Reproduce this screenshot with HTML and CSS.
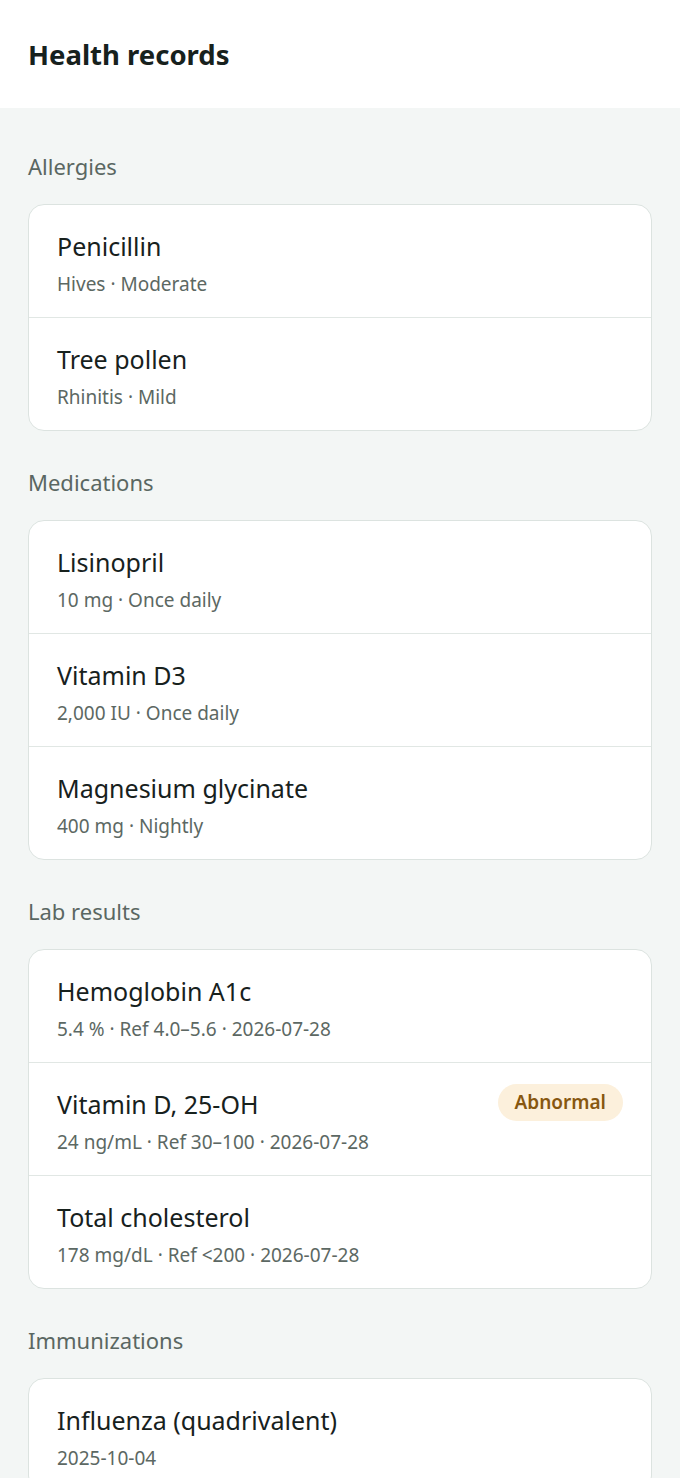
FILE: index.html
```html
<!DOCTYPE html>
<html lang="en">
<head>
<meta charset="utf-8">
<title>Health records</title>
<link rel="stylesheet" href="styles.css">
</head>
<body>
<header class="topbar">
  <h1 class="title">Health records</h1>
</header>
<main class="content">
  <section class="section">
    <h2 class="section-label">Allergies</h2>
    <div class="card">
      <div class="row"><div class="row-text"><div class="row-title">Penicillin</div><div class="row-sub">Hives · Moderate</div></div></div>
      <div class="row"><div class="row-text"><div class="row-title">Tree pollen</div><div class="row-sub">Rhinitis · Mild</div></div></div>
    </div>
  </section>
  <section class="section">
    <h2 class="section-label">Medications</h2>
    <div class="card">
      <div class="row"><div class="row-text"><div class="row-title">Lisinopril</div><div class="row-sub">10 mg · Once daily</div></div></div>
      <div class="row"><div class="row-text"><div class="row-title">Vitamin D3</div><div class="row-sub">2,000 IU · Once daily</div></div></div>
      <div class="row"><div class="row-text"><div class="row-title">Magnesium glycinate</div><div class="row-sub">400 mg · Nightly</div></div></div>
    </div>
  </section>
  <section class="section">
    <h2 class="section-label">Lab results</h2>
    <div class="card">
      <div class="row"><div class="row-text"><div class="row-title">Hemoglobin A1c</div><div class="row-sub">5.4 % · Ref 4.0–5.6 · 2026-07-28</div></div></div>
      <div class="row"><div class="row-text"><div class="row-title">Vitamin D, 25-OH</div><div class="row-sub">24 ng/mL · Ref 30–100 · 2026-07-28</div></div><span class="badge">Abnormal</span></div>
      <div class="row"><div class="row-text"><div class="row-title">Total cholesterol</div><div class="row-sub">178 mg/dL · Ref &lt;200 · 2026-07-28</div></div></div>
    </div>
  </section>
  <section class="section">
    <h2 class="section-label">Immunizations</h2>
    <div class="card">
      <div class="row"><div class="row-text"><div class="row-title">Influenza (quadrivalent)</div><div class="row-sub">2025-10-04</div></div></div>
    </div>
  </section>
</main>
</body>
</html>
```
FILE: styles.css
```css
* { box-sizing: border-box; }
html, body { margin: 0; padding: 0; }
body {
  background: #f3f6f5;
  font-family: "Noto Sans", "Open Sans", sans-serif;
  color: #18221e;
}
.topbar {
  background: #ffffff;
  height: 108px;
  padding: 0 28px;
  display: flex;
  align-items: center;
}
.title {
  margin: 2px 0 0;
  font-size: 27.5px;
  font-weight: 700;
  line-height: 36px;
  color: #17211d;
}
.content {
  padding: 44px 28px 40px;
  display: flex;
  flex-direction: column;
  gap: 37px;
}
.section-label {
  margin: 0 0 24px;
  font-size: 22px;
  font-weight: 400;
  line-height: 28px;
  color: #5a6762;
}
.card {
  background: #ffffff;
  border: 1px solid #dce3e0;
  border-radius: 16px;
  overflow: hidden;
}
.row {
  display: flex;
  align-items: flex-start;
  justify-content: space-between;
  gap: 16px;
  padding: 25px 28px 20px;
  border-top: 1px solid #e1e7e4;
  min-height: 113px;
}
.row:first-child { border-top: none; min-height: 112px; padding-top: 25px; }
.row-title {
  font-size: 25px;
  line-height: 32px;
  color: #17211d;
}
.row-sub {
  margin-top: 9px;
  font-size: 19px;
  line-height: 26px;
  color: #5c6863;
}
.badge {
  flex: none;
  margin-top: -4px;
  padding: 5px 17px;
  border-radius: 19px;
  background: #fcf0dc;
  color: #875710;
  font-size: 19px;
  font-weight: 600;
  line-height: 27px;
}
```
